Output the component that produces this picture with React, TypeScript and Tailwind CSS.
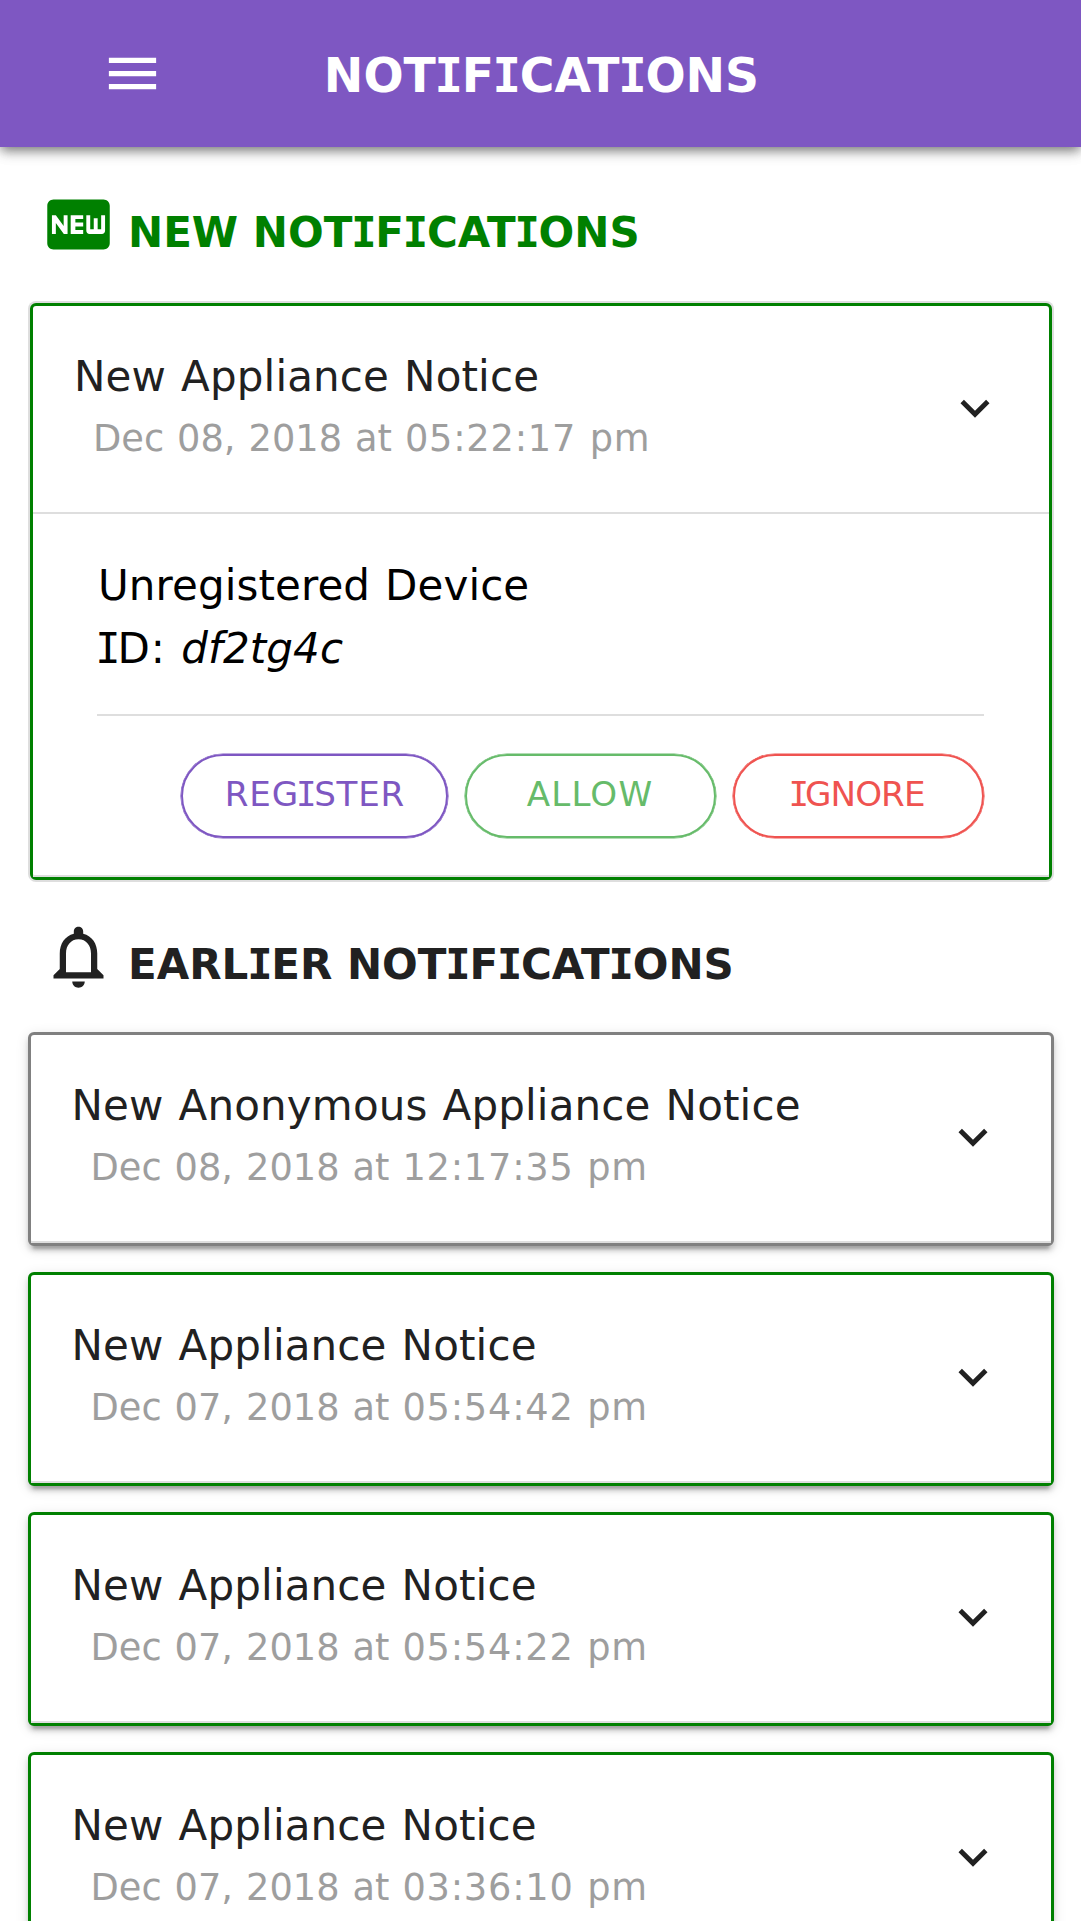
import type { ReactNode } from 'react';
import { MdExpandMore, MdFiberNew, MdMenu, MdNotificationsNone } from 'react-icons/md';

/* Capital I drawn with serifs, as wide-set UI faces do. */
function SerifCaps({ text, bold }: { text: string; bold?: boolean }) {
  return (
    <>
      {text.split(/(I)/).map((part, i) =>
        part === 'I' ? (
          <span
            key={i}
            className={
              bold
                ? "mx-[-0.028em] font-['DejaVu_Sans_Mono',monospace]"
                : "mx-[-0.09em] font-['DejaVu_Sans_Mono',monospace]"
            }
          >
            I
          </span>
        ) : (
          part
        ),
      )}
    </>
  );
}

function SectionTitle({ icon, text, className }: { icon: ReactNode; text: string; className: string }) {
  return (
    <div className={`flex h-[77px] items-start gap-[12px] pl-[41px] ${className}`}>
      {icon}
      <h2 className="mt-[14px] text-[42px] leading-[63px] font-bold whitespace-nowrap">
        <SerifCaps text={text} bold />
      </h2>
    </div>
  );
}

function NoticeHeader({ title, day, time }: { title: string; day: string; time: string }) {
  return (
    <div className="flex items-start justify-between">
      <div className="whitespace-nowrap">
        <h3 className="text-[42px] leading-[63px] tracking-[0.15px] [word-spacing:1.5px] text-[#212121]">{title}</h3>
        <p className="mt-[3px] ml-[19px] text-[36.75px] leading-[55px] [word-spacing:1.3px] text-[#9e9e9e]">
          {day} at <span className="tracking-[0.75px]">{time}</span>
        </p>
      </div>
      <MdExpandMore className="mt-[34px] size-[58px] shrink-0 text-[#212121]" />
    </div>
  );
}

const cardShadow =
  'shadow-[0_8px_3px_-5px_rgba(0,0,0,0.2),0_5px_5px_0_rgba(0,0,0,0.14),0_3px_13px_0_rgba(0,0,0,0.12)]';

type Notice = { title: string; day: string; time: string; border: string };

function NoticeCard({ title, day, time, border }: Notice) {
  return (
    <article className={`h-[214px] shrink-0 rounded-[6px] border-[3px] bg-white ${border} ${cardShadow}`}>
      <div className="h-full border-b-2 border-[#dedede] pt-[39px] pr-[49px] pl-[41px]">
        <NoticeHeader title={title} day={day} time={time} />
      </div>
    </article>
  );
}

function PillButton({ text, className }: { text: string; className: string }) {
  return (
    <button
      className={`flex h-[84px] items-center justify-center rounded-full border-2 pb-[3px] text-[34.125px] leading-none shadow-[0_0_0_0.6px_currentColor] ${className}`}
    >
      <span>
        <SerifCaps text={text} />
      </span>
    </button>
  );
}

const earlier: Notice[] = [
  { title: 'New Anonymous Appliance Notice', day: 'Dec 08, 2018', time: '12:17:35 pm', border: 'border-[#808080]' },
  { title: 'New Appliance Notice', day: 'Dec 07, 2018', time: '05:54:42 pm', border: 'border-[#008000]' },
  { title: 'New Appliance Notice', day: 'Dec 07, 2018', time: '05:54:22 pm', border: 'border-[#008000]' },
  { title: 'New Appliance Notice', day: 'Dec 07, 2018', time: '03:36:10 pm', border: 'border-[#008000]' },
];

export default function App() {
  return (
    <div className="flex h-[1921px] w-[1081px] flex-col overflow-hidden bg-white font-['DejaVu_Sans',sans-serif]">
      <header className="grid h-[147px] shrink-0 grid-cols-[1fr_auto_1fr] items-center bg-[#7e57c2] text-white shadow-[0_5px_10px_-3px_rgba(0,0,0,0.2),0_10px_13px_0_rgba(0,0,0,0.04),0_3px_12px_0_rgba(0,0,0,0.42)]">
        <button aria-label="Menu" className="ml-[101px] w-[63px]">
          <MdMenu className="size-[63px]" />
        </button>
        <h1 className="pt-[4px] pl-[2px] text-[47.25px] leading-[60px] font-bold">
          <SerifCaps text="NOTIFICATIONS" bold />
        </h1>
      </header>

      <SectionTitle
        className="mt-[40px] text-[#008000]"
        icon={<MdFiberNew className="-mt-[0.5px] size-[75px] shrink-0" />}
        text="NEW NOTIFICATIONS"
      />

      <article className="mt-[39px] mr-[29.5px] ml-[30px] flex h-[577px] shrink-0 flex-col rounded-[6px] border-[3px] border-[#008000] bg-white shadow-[0_0_0_2px_#dedede]">
        <div className="h-[208px] border-b-2 border-[#dedede] pt-[39px] pr-[45px] pl-[41px]">
          <NoticeHeader title="New Appliance Notice" day="Dec 08, 2018" time="05:22:17 pm" />
        </div>
        <div className="flex grow flex-col border-b-2 border-[#dedede] pt-[40px] pr-[65px] pl-[64px]">
          <p className="ml-[1px] text-[42px] leading-[63px] tracking-[0.1px] text-black [word-spacing:1.5px]">
            Unregistered Device
            <br />
            <span className="ml-[1px] tracking-[0.8px]">
              <SerifCaps text="ID: " />
            </span>
            <i>df2tg4c</i>
          </p>
          <hr className="mt-[34px] border-t-2 border-[#dedede]" />
          <div className="mt-[37.5px] flex justify-end gap-[17px]">
            <PillButton text="REGISTER" className="w-[267px] border-[#7e57c2] pl-[2px] tracking-[0.8px] text-[#7e57c2]" />
            <PillButton text="ALLOW" className="w-[251px] border-[#66bb6a] tracking-[1.2px] text-[#66bb6a]" />
            <PillButton text="IGNORE" className="w-[251px] border-[#ef5350] tracking-[-0.9px] text-[#ef5350]" />
          </div>
        </div>
      </article>

      <SectionTitle
        className="mt-[39px] text-[#212121]"
        icon={<MdNotificationsNone className="size-[75px] shrink-0" />}
        text="EARLIER NOTIFICATIONS"
      />

      <div className="mt-[36px] mr-[27px] ml-[27.5px] flex flex-col gap-[26px]">
        {earlier.map((n) => (
          <NoticeCard key={n.time} {...n} />
        ))}
      </div>
    </div>
  );
}
